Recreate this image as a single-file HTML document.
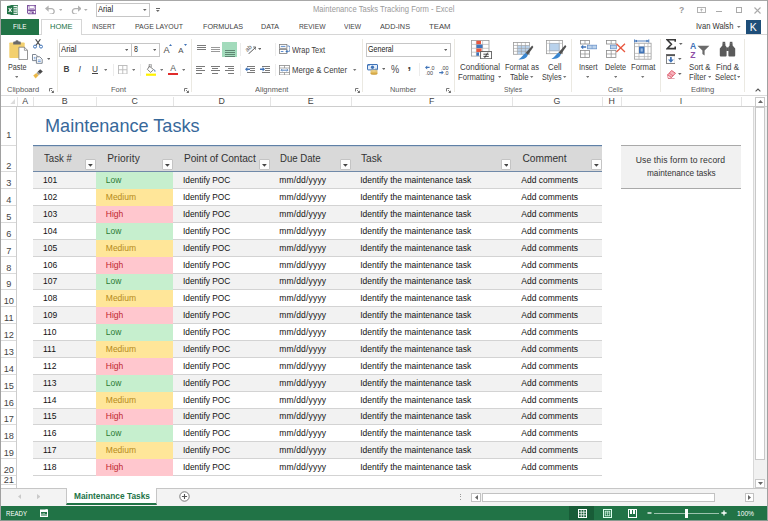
<!DOCTYPE html>
<html lang="en">
<head>
<meta charset="utf-8">
<title>Maintenance Tasks Tracking Form - Excel</title>
<style>
html,body{margin:0;padding:0}
body{width:768px;height:521px;overflow:hidden;background:#fff;font-family:"Liberation Sans",sans-serif;position:relative}
.t{position:absolute;white-space:nowrap;margin:0}
.b{position:absolute;margin:0;display:block}
</style>
</head>
<body>
<!-- title bar and tabs -->
<div class="b" style="left:0px;top:0px;width:768px;height:96px;background:#fff;"></div>
<svg class="b" style="left:7px;top:5px" width="11" height="10" viewBox="0 0 11 10"><rect x="4" y="0.6" width="7" height="8.8" fill="#fff" stroke="#217346" stroke-width="0.9"/><path d="M6.2 2.5H9.8M6.2 4.2H9.8M6.2 5.9H9.8M6.2 7.6H9.8" stroke="#217346" stroke-width="0.8"/><path d="M0 1L6.5 0V10L0 9Z" fill="#217346"/><path d="M1.7 3L4.6 7M4.6 3L1.7 7" stroke="#fff" stroke-width="1.1"/></svg>
<svg class="b" style="left:27px;top:5.3px" width="9.4" height="9.4" viewBox="0 0 9.4 9.4"><path d="M0.6 0.6H8.8V8.8H1.6L0.6 7.8Z" fill="#fff" stroke="#7a4e9c" stroke-width="1.1"/><rect x="2.2" y="0.8" width="5" height="2.8" fill="#fff" stroke="#9a78b6" stroke-width="0.6"/><rect x="1.2" y="4.4" width="7" height="1.6" fill="#7a4e9c"/><rect x="2.6" y="6.4" width="4.2" height="2.4" fill="#7a4e9c"/><rect x="3.4" y="6.9" width="1.2" height="1.6" fill="#fff"/></svg>
<svg class="b" style="left:45px;top:4.6px" width="10.6" height="9.6" viewBox="0 0 10.6 9.6"><path d="M1.4 3.6H6.4A2.8 2.8 0 0 1 6.4 9.2H4.6" fill="none" stroke="#b2b2b2" stroke-width="1.3"/><path d="M0 3.6L3.6 0.4V6.8Z" fill="#b2b2b2"/></svg>
<svg class="b" style="left:58.6px;top:8.6px" width="3.6" height="2" viewBox="0 0 3.6 2"><path d="M0 0H3.6 L1.8 2Z" fill="#b0b0b0"/></svg>
<svg class="b" style="left:70.8px;top:4.6px" width="10.6" height="9.6" viewBox="0 0 10.6 9.6"><path d="M9.2 3.6H4.2A2.8 2.8 0 0 0 4.2 9.2H6" fill="none" stroke="#b2b2b2" stroke-width="1.3"/><path d="M10.6 3.6L7 0.4V6.8Z" fill="#b2b2b2"/></svg>
<svg class="b" style="left:84.4px;top:8.6px" width="3.6" height="2" viewBox="0 0 3.6 2"><path d="M0 0H3.6 L1.8 2Z" fill="#b0b0b0"/></svg>
<div class="b" style="left:95.5px;top:3px;width:54.5px;height:13.5px;background:#fff;border:1px solid #c6c6c6;box-sizing:border-box;"></div>
<div class="t" style="left:97.6px;top:4.2px;font-size:8.6px;line-height:11px;color:#222;transform:scaleX(0.883);transform-origin:0 50%;">Arial</div>
<svg class="b" style="left:143.2px;top:9.3px" width="3.6" height="2" viewBox="0 0 3.6 2"><path d="M0 0H3.6 L1.8 2Z" fill="#666"/></svg>
<div class="b" style="left:156.3px;top:8px;width:3.6px;height:0.9px;background:#666;"></div>
<svg class="b" style="left:156.3px;top:9.8px" width="3.6" height="2" viewBox="0 0 3.6 2"><path d="M0 0H3.6 L1.8 2Z" fill="#666"/></svg>
<div class="t" style="left:312.5px;top:4.4px;font-size:8.2px;line-height:11px;color:#9a9a9a;transform:scaleX(0.931);transform-origin:0 50%;">Maintenance Tasks Tracking Form - Excel</div>
<div class="t" style="left:679.07px;top:4.5px;font-size:8.6px;line-height:11px;color:#999;font-weight:bold;">?</div>
<svg class="b" style="left:696.5px;top:7px" width="9" height="6" viewBox="0 0 9 6"><rect x="0.5" y="0.5" width="8" height="5" fill="none" stroke="#aaa" stroke-width="0.9"/><path d="M4.5 2V4.6M3.1 3.2L4.5 1.8L5.9 3.2" fill="none" stroke="#aaa" stroke-width="0.8"/></svg>
<div class="b" style="left:716px;top:10.5px;width:6px;height:1.2px;background:#aaa;"></div>
<div class="b" style="left:735.5px;top:7px;width:6.5px;height:5.8px;border:1px solid #aaa;box-sizing:border-box;border-top-width:1.6px;"></div>
<svg class="b" style="left:754px;top:6.5px" width="7" height="7" viewBox="0 0 7 7"><path d="M0.5 0.5L6.5 6.5M6.5 0.5L0.5 6.5" stroke="#aaa" stroke-width="1.1"/></svg>
<div class="b" style="left:0px;top:34px;width:768px;height:1px;background:#d6d6d6;"></div>
<div class="b" style="left:0px;top:19px;width:39px;height:15.5px;background:#217346;"></div>
<div class="t" style="left:13.3px;top:22px;font-size:8px;line-height:10px;color:#fff;transform:scaleX(0.793);transform-origin:0 50%;">FILE</div>
<div class="b" style="left:41px;top:19px;width:41px;height:16px;background:#fff;border:1px solid #d6d6d6;border-bottom:none;box-sizing:border-box;"></div>
<div class="t" style="left:50px;top:22.2px;font-size:8px;line-height:10px;color:#217346;transform:scaleX(0.937);transform-origin:0 50%;">HOME</div>
<div class="t" style="left:91.7px;top:22.2px;font-size:8px;line-height:10px;color:#444;transform:scaleX(0.798);transform-origin:0 50%;">INSERT</div>
<div class="t" style="left:135px;top:22.2px;font-size:8px;line-height:10px;color:#444;transform:scaleX(0.868);transform-origin:0 50%;">PAGE LAYOUT</div>
<div class="t" style="left:202.5px;top:22.2px;font-size:8px;line-height:10px;color:#444;transform:scaleX(0.9);transform-origin:0 50%;">FORMULAS</div>
<div class="t" style="left:261px;top:22.2px;font-size:8px;line-height:10px;color:#444;transform:scaleX(0.893);transform-origin:0 50%;">DATA</div>
<div class="t" style="left:298.5px;top:22.2px;font-size:8px;line-height:10px;color:#444;transform:scaleX(0.84);transform-origin:0 50%;">REVIEW</div>
<div class="t" style="left:344px;top:22.2px;font-size:8px;line-height:10px;color:#444;transform:scaleX(0.831);transform-origin:0 50%;">VIEW</div>
<div class="t" style="left:380px;top:22.2px;font-size:8px;line-height:10px;color:#444;transform:scaleX(0.912);transform-origin:0 50%;">ADD-INS</div>
<div class="t" style="left:429px;top:22.2px;font-size:8px;line-height:10px;color:#444;transform:scaleX(0.967);transform-origin:0 50%;">TEAM</div>
<div class="t" style="left:695.5px;top:20.8px;font-size:8.4px;line-height:11px;color:#333;transform:scaleX(0.909);transform-origin:0 50%;">Ivan Walsh</div>
<svg class="b" style="left:737.2px;top:25.8px" width="3.6" height="2" viewBox="0 0 3.6 2"><path d="M0 0H3.6 L1.8 2Z" fill="#777"/></svg>
<div class="b" style="left:746px;top:20px;width:14.5px;height:14px;background:#1e4e79;"></div>
<div class="t" style="left:749.8px;top:20px;font-size:10.5px;line-height:14px;color:#fff;">K</div>
<!-- ribbon -->
<svg class="b" style="left:9px;top:40px" width="19" height="20" viewBox="0 0 19 20"><rect x="0.3" y="2.4" width="15.4" height="15.6" rx="0.8" fill="#f3d06f"/><path d="M4.2 4.4V2.4A0.8 0.8 0 0 1 5 1.6H6.4A1.6 1.4 0 0 1 9.6 1.6H11A0.8 0.8 0 0 1 11.8 2.4V4.4Z" fill="#6a6a6a"/><path d="M9.9 7.2H15.4L18.5 10.3V19.6H9.9Z" fill="#fff" stroke="#7a7a7a" stroke-width="0.8"/><path d="M15.4 7.2V10.3H18.5" fill="none" stroke="#7a7a7a" stroke-width="0.7"/></svg>
<div class="t" style="left:7.5px;top:61.5px;font-size:8.3px;line-height:11px;color:#3c3c3c;transform:scaleX(0.872);transform-origin:0 50%;">Paste</div>
<svg class="b" style="left:14.9px;top:75.8px" width="3.6" height="2" viewBox="0 0 3.6 2"><path d="M0 0H3.6 L1.8 2Z" fill="#777"/></svg>
<svg class="b" style="left:32.8px;top:39.3px" width="10" height="9.6" viewBox="0 0 10 9.6"><path d="M2.6 0.2L7.2 6.6M7.4 0.2L2.8 6.6" stroke="#505050" stroke-width="1.15" fill="none"/><circle cx="2" cy="7.6" r="1.5" fill="#fff" stroke="#3f73b8" stroke-width="1"/><circle cx="8" cy="7.6" r="1.5" fill="#fff" stroke="#3f73b8" stroke-width="1"/></svg>
<svg class="b" style="left:32.2px;top:54.2px" width="10.8" height="9.8" viewBox="0 0 10.8 9.8"><path d="M0.5 0.5H3.8L5.8 2.5V6.6H0.5Z" fill="#fff" stroke="#707a88" stroke-width="0.9"/><path d="M4.4 2.8H7.8L10.2 5.2V9.3H4.4Z" fill="#fff" stroke="#707a88" stroke-width="0.9"/><path d="M1.8 3.4H3.4M1.8 4.8H3.4M5.8 6H8.8M5.8 7.5H8.8" stroke="#5f8fd0" stroke-width="0.8"/></svg>
<svg class="b" style="left:46.5px;top:58.4px" width="3.6" height="2" viewBox="0 0 3.6 2"><path d="M0 0H3.6 L1.8 2Z" fill="#666"/></svg>
<svg class="b" style="left:33.3px;top:69.3px" width="10" height="9.6" viewBox="0 0 10 9.6"><path d="M7.2 0.2L9.8 2.4L7 5L4.6 2.8Z" fill="#4a4a4a"/><path d="M4.4 3L6.8 5.2L5.9 6.1L3.5 3.9Z" fill="#8a8a8a"/><path d="M3.3 4.1L5.7 6.3L2.6 9.4L0.2 6.6Z" fill="#efc050"/><path d="M1.6 6.2L3.4 8M2.6 5.2L4.4 7" stroke="#d89a3c" stroke-width="0.5"/></svg>
<div class="t" style="left:6.9px;top:84.8px;font-size:7.8px;line-height:10px;color:#5a5a5a;transform:scaleX(0.964);transform-origin:0 50%;">Clipboard</div>
<svg class="b" style="left:48.8px;top:88px" width="5" height="5" viewBox="0 0 5 5"><path d="M0.5 3.4V0.5H3.4" fill="none" stroke="#777" stroke-width="1"/><path d="M2 2L4 4" stroke="#777" stroke-width="0.9"/><path d="M4.9 2.2V4.9H2.2Z" fill="#666"/></svg>
<div class="b" style="left:56.5px;top:39px;width:1px;height:53px;background:#ebe9e2;"></div>
<div class="b" style="left:59px;top:42.5px;width:73px;height:14.5px;background:#fff;border:1px solid #c6c6c6;box-sizing:border-box;"></div>
<div class="b" style="left:131px;top:42.5px;width:28.5px;height:14.5px;background:#fff;border:1px solid #c6c6c6;box-sizing:border-box;"></div>
<div class="t" style="left:61.3px;top:44.3px;font-size:8.6px;line-height:11px;color:#222;transform:scaleX(0.907);transform-origin:0 50%;">Arial</div>
<svg class="b" style="left:124.5px;top:49px" width="3.4" height="2" viewBox="0 0 3.4 2"><path d="M0 0H3.4 L1.7 2Z" fill="#666"/></svg>
<div class="t" style="left:134px;top:44.3px;font-size:8.6px;line-height:11px;color:#222;transform:scaleX(0.815);transform-origin:0 50%;">8</div>
<svg class="b" style="left:152.6px;top:49px" width="3.4" height="2" viewBox="0 0 3.4 2"><path d="M0 0H3.4 L1.7 2Z" fill="#666"/></svg>
<div class="t" style="left:163.6px;top:44px;font-size:9.2px;line-height:12px;color:#4a4a4a;">A</div>
<svg class="b" style="left:169.3px;top:44px" width="3" height="2" viewBox="0 0 3 2"><path d="M0 2H3L1.5 0Z" fill="#3f73b8"/></svg>
<div class="t" style="left:178.2px;top:45.6px;font-size:7.8px;line-height:10px;color:#4a4a4a;">A</div>
<svg class="b" style="left:183.5px;top:44px" width="3" height="2" viewBox="0 0 3 2"><path d="M0 0H3L1.5 2Z" fill="#3f73b8"/></svg>
<div class="t" style="left:63.4px;top:63.7px;font-size:8.3px;line-height:11px;color:#444;font-weight:bold;">B</div>
<div class="t" style="left:78.6px;top:63.7px;font-size:8.8px;line-height:11px;color:#444;font-style:italic;font-family:"Liberation Serif",serif;font-weight:bold;">I</div>
<div class="t" style="left:92px;top:63.5px;font-size:8.3px;line-height:11px;color:#444;text-decoration:underline;">U</div>
<svg class="b" style="left:103.8px;top:69px" width="3.4" height="2" viewBox="0 0 3.4 2"><path d="M0 0H3.4 L1.7 2Z" fill="#777"/></svg>
<div class="b" style="left:113px;top:64px;width:1px;height:12px;background:#ececec;"></div>
<svg class="b" style="left:118px;top:64.5px" width="9.5" height="9.5" viewBox="0 0 9.5 9.5"><rect x="0.5" y="0.5" width="8.5" height="8.5" fill="none" stroke="#b9b9b9" stroke-width="0.9"/><path d="M4.75 0.5V9M0.5 4.75H9" stroke="#b9b9b9" stroke-width="0.9"/></svg>
<svg class="b" style="left:132px;top:69px" width="3.4" height="2" viewBox="0 0 3.4 2"><path d="M0 0H3.4 L1.7 2Z" fill="#777"/></svg>
<div class="b" style="left:140px;top:64px;width:1px;height:12px;background:#ececec;"></div>
<svg class="b" style="left:146px;top:63.5px" width="10.5" height="12" viewBox="0 0 10.5 12"><path d="M3.4 2.2L7.6 5.6L4.6 8.4L1.4 5.4Z" fill="#fff" stroke="#666" stroke-width="0.8"/><path d="M3.2 3.4V0.8A1 1 0 0 1 5.2 0.8V3.2" fill="none" stroke="#666" stroke-width="0.7"/><path d="M8.6 5.2C9.6 6.6 9.8 7.4 9 7.8C8.2 7.6 8 6.6 8.6 5.2Z" fill="#3f73b8"/><rect x="0" y="9.6" width="10" height="2.2" fill="#fff200"/></svg>
<svg class="b" style="left:160.1px;top:69px" width="3.4" height="2" viewBox="0 0 3.4 2"><path d="M0 0H3.4 L1.7 2Z" fill="#777"/></svg>
<div class="t" style="left:170.13px;top:62.8px;font-size:8.6px;line-height:11px;color:#555;">A</div>
<div class="b" style="left:168px;top:73px;width:10px;height:2.3px;background:#e02b2b;"></div>
<svg class="b" style="left:182.1px;top:69px" width="3.4" height="2" viewBox="0 0 3.4 2"><path d="M0 0H3.4 L1.7 2Z" fill="#777"/></svg>
<div class="t" style="left:110.9px;top:84.8px;font-size:7.8px;line-height:10px;color:#5a5a5a;transform:scaleX(0.967);transform-origin:0 50%;">Font</div>
<svg class="b" style="left:184px;top:87.8px" width="5" height="5" viewBox="0 0 5 5"><path d="M0.5 3.4V0.5H3.4" fill="none" stroke="#777" stroke-width="1"/><path d="M2 2L4 4" stroke="#777" stroke-width="0.9"/><path d="M4.9 2.2V4.9H2.2Z" fill="#666"/></svg>
<div class="b" style="left:191px;top:39px;width:1px;height:53px;background:#ebe9e2;"></div>
<div class="b" style="left:196.5px;top:44.5px;width:9px;height:0.9px;background:#7a7a7a;"></div>
<div class="b" style="left:196.5px;top:46.6px;width:9px;height:0.9px;background:#7a7a7a;"></div>
<div class="b" style="left:196.5px;top:48.7px;width:9px;height:0.9px;background:#7a7a7a;"></div>
<div class="b" style="left:210.7px;top:46.8px;width:9px;height:0.9px;background:#9a9a9a;"></div>
<div class="b" style="left:210.7px;top:48.8px;width:9px;height:0.9px;background:#9a9a9a;"></div>
<div class="b" style="left:210.7px;top:50.8px;width:9px;height:0.9px;background:#9a9a9a;"></div>
<div class="b" style="left:222.3px;top:42px;width:14.7px;height:15.3px;background:#a3dbbc;"></div>
<div class="b" style="left:225px;top:49.6px;width:9.6px;height:0.9px;background:#5f8672;"></div>
<div class="b" style="left:225px;top:51.7px;width:9.6px;height:0.9px;background:#5f8672;"></div>
<div class="b" style="left:225px;top:53.8px;width:9.6px;height:0.9px;background:#5f8672;"></div>
<div class="b" style="left:225px;top:55.9px;width:9.6px;height:0.9px;background:#5f8672;"></div>
<div class="b" style="left:240px;top:43px;width:1px;height:13px;background:#ececec;"></div>
<svg class="b" style="left:244.5px;top:43.5px" width="11.5" height="10.5" viewBox="0 0 11.5 10.5"><path d="M3.4 10L10.6 3.4" stroke="#555" stroke-width="1"/><path d="M8.2 3L10.9 3.1L10.8 5.8" fill="none" stroke="#555" stroke-width="0.9"/><text x="0.2" y="6.2" font-family="Liberation Sans, sans-serif" font-size="6" fill="#555" transform="rotate(-42 3.4 4.4)">ab</text></svg>
<svg class="b" style="left:257.6px;top:48.4px" width="3.6" height="2" viewBox="0 0 3.6 2"><path d="M0 0H3.6 L1.8 2Z" fill="#666"/></svg>
<div class="b" style="left:274.5px;top:43px;width:1px;height:13px;background:#ececec;"></div>
<svg class="b" style="left:278.7px;top:44px" width="11.4" height="10" viewBox="0 0 11.4 10"><rect x="0.5" y="0.5" width="7.4" height="3.8" fill="#fff" stroke="#7d7d7d" stroke-width="0.8"/><rect x="0.5" y="5.6" width="7.4" height="3.8" fill="#fff" stroke="#7d7d7d" stroke-width="0.8"/><path d="M1.8 2.4H6.4M1.8 7.5H4.4" stroke="#5f8fd0" stroke-width="1"/><path d="M8.4 2H9.6A1.4 1.4 0 0 1 11 3.4V5.6A1.4 1.4 0 0 1 9.6 7.4H7.6" fill="none" stroke="#3f73b8" stroke-width="0.9"/><path d="M8.4 5.8L6.4 7.4L8.4 9Z" fill="#3f73b8"/></svg>
<div class="t" style="left:292px;top:44.5px;font-size:8.3px;line-height:11px;color:#3c3c3c;transform:scaleX(0.89);transform-origin:0 50%;">Wrap Text</div>
<div class="b" style="left:196.4px;top:66.2px;width:9px;height:0.9px;background:#7a7a7a;"></div>
<div class="b" style="left:196.4px;top:68.3px;width:6px;height:0.9px;background:#7a7a7a;"></div>
<div class="b" style="left:196.4px;top:70.4px;width:9px;height:0.9px;background:#7a7a7a;"></div>
<div class="b" style="left:196.4px;top:72.5px;width:6px;height:0.9px;background:#7a7a7a;"></div>
<div class="b" style="left:210.8px;top:66.2px;width:9px;height:0.9px;background:#7a7a7a;"></div>
<div class="b" style="left:212.3px;top:68.3px;width:6px;height:0.9px;background:#7a7a7a;"></div>
<div class="b" style="left:210.8px;top:70.4px;width:9px;height:0.9px;background:#7a7a7a;"></div>
<div class="b" style="left:212.3px;top:72.5px;width:6px;height:0.9px;background:#7a7a7a;"></div>
<div class="b" style="left:225.3px;top:66.2px;width:9px;height:0.9px;background:#7a7a7a;"></div>
<div class="b" style="left:228.3px;top:68.3px;width:6px;height:0.9px;background:#7a7a7a;"></div>
<div class="b" style="left:225.3px;top:70.4px;width:9px;height:0.9px;background:#7a7a7a;"></div>
<div class="b" style="left:228.3px;top:72.5px;width:6px;height:0.9px;background:#7a7a7a;"></div>
<div class="b" style="left:240px;top:64px;width:1px;height:12px;background:#ececec;"></div>
<div class="b" style="left:247px;top:66px;width:8px;height:0.9px;background:#7a7a7a;"></div>
<div class="b" style="left:250px;top:68.1px;width:5px;height:0.9px;background:#7a7a7a;"></div>
<div class="b" style="left:250px;top:70.2px;width:5px;height:0.9px;background:#7a7a7a;"></div>
<div class="b" style="left:247px;top:72.3px;width:8px;height:0.9px;background:#7a7a7a;"></div>
<svg class="b" style="left:244.5px;top:67.2px" width="5" height="4.6" viewBox="0 0 5 4.6"><path d="M0 2.3L2.4 0V1.6H5V3H2.4V4.6Z" fill="#3f73b8"/></svg>
<div class="b" style="left:262px;top:66px;width:8px;height:0.9px;background:#7a7a7a;"></div>
<div class="b" style="left:265px;top:68.1px;width:5px;height:0.9px;background:#7a7a7a;"></div>
<div class="b" style="left:265px;top:70.2px;width:5px;height:0.9px;background:#7a7a7a;"></div>
<div class="b" style="left:262px;top:72.3px;width:8px;height:0.9px;background:#7a7a7a;"></div>
<svg class="b" style="left:259.5px;top:67.2px" width="5" height="4.6" viewBox="0 0 5 4.6"><path d="M5 2.3L2.6 0V1.6H0V3H2.6V4.6Z" fill="#3f73b8"/></svg>
<div class="b" style="left:274.5px;top:64px;width:1px;height:12px;background:#ececec;"></div>
<svg class="b" style="left:279px;top:64.5px" width="11" height="10.5" viewBox="0 0 11 10.5"><rect x="0.5" y="0.5" width="10" height="9.5" fill="#fff" stroke="#8a8a8a" stroke-width="0.8"/><path d="M0.5 3H10.5M0.5 7.5H10.5M5.5 0.5V3M5.5 7.5V10" stroke="#8a8a8a" stroke-width="0.7"/><path d="M2.4 5.2H8.6" stroke="#3f73b8" stroke-width="0.9"/><path d="M3.2 4L2 5.2L3.2 6.4M7.8 4L9 5.2L7.8 6.4" fill="none" stroke="#3f73b8" stroke-width="0.8"/></svg>
<div class="t" style="left:292px;top:64.5px;font-size:8.3px;line-height:11px;color:#3c3c3c;transform:scaleX(0.939);transform-origin:0 50%;">Merge &amp; Center</div>
<svg class="b" style="left:353.3px;top:69px" width="3.4" height="2" viewBox="0 0 3.4 2"><path d="M0 0H3.4 L1.7 2Z" fill="#777"/></svg>
<div class="t" style="left:254.6px;top:84.8px;font-size:7.8px;line-height:10px;color:#5a5a5a;transform:scaleX(0.963);transform-origin:0 50%;">Alignment</div>
<svg class="b" style="left:355px;top:87.8px" width="5" height="5" viewBox="0 0 5 5"><path d="M0.5 3.4V0.5H3.4" fill="none" stroke="#777" stroke-width="1"/><path d="M2 2L4 4" stroke="#777" stroke-width="0.9"/><path d="M4.9 2.2V4.9H2.2Z" fill="#666"/></svg>
<div class="b" style="left:362px;top:39px;width:1px;height:53px;background:#ebe9e2;"></div>
<div class="b" style="left:366px;top:42.5px;width:84.5px;height:14.5px;background:#fff;border:1px solid #c6c6c6;box-sizing:border-box;"></div>
<div class="t" style="left:367.9px;top:44.3px;font-size:8.6px;line-height:11px;color:#222;transform:scaleX(0.83);transform-origin:0 50%;">General</div>
<svg class="b" style="left:444px;top:49px" width="3.4" height="2" viewBox="0 0 3.4 2"><path d="M0 0H3.4 L1.7 2Z" fill="#666"/></svg>
<svg class="b" style="left:367.4px;top:63.8px" width="11" height="11" viewBox="0 0 11 11"><rect x="0.5" y="0.5" width="10" height="5.4" rx="0.5" fill="#e4eefa" stroke="#3f73b8" stroke-width="1"/><ellipse cx="5.5" cy="3.2" rx="1.6" ry="1.7" fill="#3f73b8"/><path d="M1.2 1.4H2.6M8.4 5H9.8" stroke="#3f73b8" stroke-width="0.8"/><ellipse cx="7" cy="9.6" rx="3.4" ry="1.1" fill="#e3b44c" stroke="#b98a2e" stroke-width="0.4"/><ellipse cx="7" cy="8.3" rx="3.4" ry="1.1" fill="#efcb6e" stroke="#b98a2e" stroke-width="0.4"/><ellipse cx="7" cy="7" rx="3.4" ry="1.1" fill="#f6dc92" stroke="#b98a2e" stroke-width="0.4"/></svg>
<svg class="b" style="left:381.7px;top:68.4px" width="3.6" height="2" viewBox="0 0 3.6 2"><path d="M0 0H3.6 L1.8 2Z" fill="#666"/></svg>
<div class="t" style="left:391.4px;top:63.3px;font-size:10.2px;line-height:13px;color:#4a4a4a;transform:scaleX(0.904);transform-origin:0 50%;">%</div>
<div class="t" style="left:407.59px;top:56.1px;font-size:13px;line-height:17px;color:#4a4a4a;font-weight:bold;">,</div>
<div class="b" style="left:418.5px;top:63px;width:1px;height:13px;background:#ececec;"></div>
<svg class="b" style="left:424.5px;top:64.5px" width="10" height="10.5" viewBox="0 0 10 10.5"><path d="M0 2.4L2.2 0.4V1.8H4.6V3H2.2V4.4Z" fill="#3f73b8"/><text x="5" y="4.6" font-family="Liberation Sans, sans-serif" font-size="5.4" fill="#444">.0</text><text x="0.5" y="10" font-family="Liberation Sans, sans-serif" font-size="5.4" fill="#444">.00</text></svg>
<svg class="b" style="left:439px;top:64.5px" width="10" height="10.5" viewBox="0 0 10 10.5"><text x="2" y="4.6" font-family="Liberation Sans, sans-serif" font-size="5.4" fill="#444">.00</text><path d="M4.8 7.6L2.6 5.6V7H0.2V8.2H2.6V9.6Z" fill="#3f73b8"/><text x="5" y="10" font-family="Liberation Sans, sans-serif" font-size="5.4" fill="#444">.0</text></svg>
<div class="t" style="left:390.1px;top:84.8px;font-size:7.8px;line-height:10px;color:#5a5a5a;transform:scaleX(0.944);transform-origin:0 50%;">Number</div>
<svg class="b" style="left:446.3px;top:87.8px" width="5" height="5" viewBox="0 0 5 5"><path d="M0.5 3.4V0.5H3.4" fill="none" stroke="#777" stroke-width="1"/><path d="M2 2L4 4" stroke="#777" stroke-width="0.9"/><path d="M4.9 2.2V4.9H2.2Z" fill="#666"/></svg>
<div class="b" style="left:453.5px;top:39px;width:1px;height:53px;background:#ebe9e2;"></div>
<svg class="b" style="left:471px;top:39.8px" width="21" height="19.2" viewBox="0 0 21 19.2"><rect x="0.5" y="0.5" width="17.5" height="15.6" fill="#fff" stroke="#9a9a9a" stroke-width="0.8"/><path d="M0.5 4.4H18M0.5 8.3H18M0.5 12.2H18M5.4 0.5V16M11.6 0.5V16" stroke="#b5b5b5" stroke-width="0.7"/><rect x="5.4" y="0.8" width="4.6" height="3.4" fill="#e8573f"/><rect x="5.4" y="4.6" width="6.2" height="3.5" fill="#3f73b8"/><rect x="5.4" y="8.5" width="5.2" height="3.5" fill="#e8573f"/><rect x="5.4" y="12.4" width="2.6" height="3.4" fill="#3f73b8"/><rect x="9.6" y="11.6" width="11" height="7.2" fill="#fff" stroke="#555" stroke-width="0.9"/><path d="M12.4 14.2H17.8M12.4 16.4H17.8M16.8 12.6L13.6 18" stroke="#333" stroke-width="0.9"/></svg>
<div class="t" style="left:460px;top:61.5px;font-size:8.3px;line-height:11px;color:#3c3c3c;transform:scaleX(0.963);transform-origin:0 50%;">Conditional</div>
<div class="t" style="left:458px;top:71.5px;font-size:8.3px;line-height:11px;color:#3c3c3c;transform:scaleX(0.92);transform-origin:0 50%;">Formatting</div>
<svg class="b" style="left:498.1px;top:76.3px" width="3.4" height="2" viewBox="0 0 3.4 2"><path d="M0 0H3.4 L1.7 2Z" fill="#777"/></svg>
<svg class="b" style="left:513px;top:41.6px" width="21" height="18.4" viewBox="0 0 21 18.4"><rect x="0.5" y="0.5" width="16" height="11.8" fill="#fff" stroke="#9a9a9a" stroke-width="0.8"/><rect x="4.4" y="3.5" width="12.1" height="8.8" fill="#b9d2ec"/><path d="M0.5 3.5H16.5M0.5 6.4H16.5M0.5 9.3H16.5M4.4 0.5V12.3M8.4 0.5V12.3M12.4 0.5V12.3" stroke="#9a9a9a" stroke-width="0.6"/><path d="M19.2 3.6L12.6 11L14.8 13L20.4 5Z" fill="#505050"/><path d="M12.6 11L14.8 13C14 16 10.5 17.6 5.4 17.6C8.6 16 10 12.6 12.6 11Z" fill="#3a86cf"/></svg>
<div class="t" style="left:505px;top:61.5px;font-size:8.3px;line-height:11px;color:#3c3c3c;transform:scaleX(0.91);transform-origin:0 50%;">Format as</div>
<div class="t" style="left:510px;top:71.5px;font-size:8.3px;line-height:11px;color:#3c3c3c;transform:scaleX(0.932);transform-origin:0 50%;">Table</div>
<svg class="b" style="left:530.3px;top:76.3px" width="3.4" height="2" viewBox="0 0 3.4 2"><path d="M0 0H3.4 L1.7 2Z" fill="#777"/></svg>
<svg class="b" style="left:546px;top:40.2px" width="21" height="19.8" viewBox="0 0 21 19.8"><rect x="0.5" y="0.5" width="16" height="13.2" fill="#fff" stroke="#9a9a9a" stroke-width="0.8"/><rect x="3.6" y="3.4" width="9.6" height="7.4" fill="#b9d2ec" stroke="#8aa9cf" stroke-width="0.6"/><path d="M0.5 3.4H16.5M0.5 10.8H16.5M3.6 0.5V13.7M13.2 0.5V13.7" stroke="#b5b5b5" stroke-width="0.6"/><path d="M19.2 5.0L12.6 12.4L14.8 14.4L20.4 6.4Z" fill="#505050"/><path d="M12.6 12.4L14.8 14.4C14 17.4 10.5 19.0 5.4 19.0C8.6 17.4 10 14.0 12.6 12.4Z" fill="#3a86cf"/></svg>
<div class="t" style="left:548px;top:61.5px;font-size:8.3px;line-height:11px;color:#3c3c3c;transform:scaleX(0.944);transform-origin:0 50%;">Cell</div>
<div class="t" style="left:542px;top:71.5px;font-size:8.3px;line-height:11px;color:#3c3c3c;transform:scaleX(0.863);transform-origin:0 50%;">Styles</div>
<svg class="b" style="left:563.3px;top:76.3px" width="3.4" height="2" viewBox="0 0 3.4 2"><path d="M0 0H3.4 L1.7 2Z" fill="#777"/></svg>
<div class="t" style="left:503.5px;top:85px;font-size:7.8px;line-height:10px;color:#5a5a5a;transform:scaleX(0.847);transform-origin:0 50%;">Styles</div>
<div class="b" style="left:570.5px;top:39px;width:1px;height:53px;background:#ebe9e2;"></div>
<svg class="b" style="left:579.6px;top:40px" width="17.6" height="18.4" viewBox="0 0 17.6 18.4"><rect x="0.5" y="0.6" width="9" height="3.4" fill="#fff" stroke="#8a8a8a" stroke-width="0.8"/><path d="M5 0.6V4" stroke="#8a8a8a" stroke-width="0.7"/><rect x="7.4" y="5.2" width="9.4" height="3.6" fill="#bcd3ec" stroke="#6b93c9" stroke-width="0.8"/><path d="M12.1 5.2V8.8" stroke="#6b93c9" stroke-width="0.6"/><path d="M0.6 7L3.2 4.8V6.3H6.2V7.7H3.2V9.2Z" fill="#3f73b8"/><rect x="0.5" y="10.6" width="9" height="6.8" fill="#fff" stroke="#8a8a8a" stroke-width="0.8"/><path d="M0.5 14H9.5M5 10.6V17.4" stroke="#8a8a8a" stroke-width="0.7"/></svg>
<div class="t" style="left:578.5px;top:61.5px;font-size:8.3px;line-height:11px;color:#3c3c3c;transform:scaleX(0.891);transform-origin:0 50%;">Insert</div>
<svg class="b" style="left:586.1px;top:76.3px" width="3.4" height="2" viewBox="0 0 3.4 2"><path d="M0 0H3.4 L1.7 2Z" fill="#777"/></svg>
<svg class="b" style="left:606px;top:40px" width="19.6" height="18.4" viewBox="0 0 19.6 18.4"><rect x="0.5" y="0.6" width="9.4" height="3.4" fill="#fff" stroke="#8a8a8a" stroke-width="0.8"/><path d="M5.2 0.6V4" stroke="#8a8a8a" stroke-width="0.7"/><rect x="4.4" y="5.2" width="6" height="3.6" fill="#bcd3ec" stroke="#6b93c9" stroke-width="0.8"/><path d="M10.4 3.8L19 12M19 3.8L10.4 12" stroke="#e8573f" stroke-width="1.3"/><rect x="0.5" y="10.6" width="9.4" height="6.8" fill="#fff" stroke="#8a8a8a" stroke-width="0.8"/><path d="M0.5 14H9.9M5.2 10.6V17.4" stroke="#8a8a8a" stroke-width="0.7"/></svg>
<div class="t" style="left:605px;top:61.5px;font-size:8.3px;line-height:11px;color:#3c3c3c;transform:scaleX(0.875);transform-origin:0 50%;">Delete</div>
<svg class="b" style="left:613.5px;top:76.3px" width="3.4" height="2" viewBox="0 0 3.4 2"><path d="M0 0H3.4 L1.7 2Z" fill="#777"/></svg>
<svg class="b" style="left:634px;top:39.4px" width="17.6" height="20.8" viewBox="0 0 17.6 20.8"><path d="M0.6 2H14.8M0.6 0.4V3.6M14.8 0.4V3.6" stroke="#3f73b8" stroke-width="0.9"/><path d="M0.8 2L3 0.8V3.2ZM14.6 2L12.4 0.8V3.2Z" fill="#3f73b8"/><rect x="0.5" y="4.2" width="16.6" height="16" fill="#fff" stroke="#9a9a9a" stroke-width="0.8"/><path d="M0.5 7.6H17M0.5 14.4H17M0.5 17.6H17M5 4.2V20.2M10.4 4.2V20.2M14 4.2V20.2" stroke="#b0b0b0" stroke-width="0.7"/><rect x="5" y="7.6" width="5.4" height="6.8" fill="#3f73b8"/><rect x="6.6" y="9.4" width="2.2" height="3.2" fill="#9fc0e6"/></svg>
<div class="t" style="left:631px;top:61.5px;font-size:8.3px;line-height:11px;color:#3c3c3c;transform:scaleX(0.932);transform-origin:0 50%;">Format</div>
<svg class="b" style="left:641.3px;top:76.3px" width="3.4" height="2" viewBox="0 0 3.4 2"><path d="M0 0H3.4 L1.7 2Z" fill="#777"/></svg>
<div class="t" style="left:608px;top:84.8px;font-size:7.8px;line-height:10px;color:#5a5a5a;transform:scaleX(0.865);transform-origin:0 50%;">Cells</div>
<div class="b" style="left:660px;top:39px;width:1px;height:53px;background:#ebe9e2;"></div>
<svg class="b" style="left:665.5px;top:39px" width="10" height="10.5" viewBox="0 0 10 10.5"><path d="M9.2 2.8V0.8H1.2L5.4 5.2L1.2 9.6H9.2V7.6" fill="none" stroke="#3a3a3a" stroke-width="1.6"/></svg>
<svg class="b" style="left:679px;top:43px" width="3.6" height="2" viewBox="0 0 3.6 2"><path d="M0 0H3.6 L1.8 2Z" fill="#666"/></svg>
<svg class="b" style="left:665.6px;top:54.2px" width="9.8" height="10" viewBox="0 0 9.8 10"><rect x="0.5" y="0.5" width="8.8" height="9" fill="#fff" stroke="#777" stroke-width="0.9"/><rect x="0.5" y="0.5" width="8.8" height="1.6" fill="#555"/><path d="M4.9 3V7.4" stroke="#3f73b8" stroke-width="1.7"/><path d="M2 5.4H7.8L4.9 8.8Z" fill="#3f73b8"/></svg>
<svg class="b" style="left:678.2px;top:58px" width="3.6" height="2" viewBox="0 0 3.6 2"><path d="M0 0H3.6 L1.8 2Z" fill="#666"/></svg>
<svg class="b" style="left:665.8px;top:69.6px" width="10" height="9.4" viewBox="0 0 10 9.4"><path d="M5.6 0.5L9.5 3.2L5.4 7.6L1.6 5Z" fill="#f7b3bd" stroke="#d9485a" stroke-width="0.8"/><path d="M3.2 3.2L7 5.8" stroke="#d9485a" stroke-width="0.6"/><path d="M1.6 5L5.4 7.6L4 8.3H2Z" fill="#fff" stroke="#d9485a" stroke-width="0.6"/><path d="M2 8.8H8.6" stroke="#c05060" stroke-width="0.7"/></svg>
<svg class="b" style="left:678.2px;top:73.2px" width="3.6" height="2" viewBox="0 0 3.6 2"><path d="M0 0H3.6 L1.8 2Z" fill="#666"/></svg>
<svg class="b" style="left:690px;top:40.6px" width="20" height="17.6" viewBox="0 0 20 17.6"><text x="0" y="7.6" font-family="Liberation Sans, sans-serif" font-size="9.6" font-weight="bold" fill="#3f73b8" transform="scale(0.9 1)">A</text><text x="0.4" y="16.8" font-family="Liberation Sans, sans-serif" font-size="9.6" font-weight="bold" fill="#8d4ea5" transform="scale(0.9 1)">Z</text><path d="M7.4 4.8H19.4L14.6 9.6V14.6L12.4 13V9.6Z" fill="#6a6a6a"/></svg>
<div class="t" style="left:689px;top:61.5px;font-size:8.3px;line-height:11px;color:#3c3c3c;transform:scaleX(0.932);transform-origin:0 50%;">Sort &amp;</div>
<div class="t" style="left:689px;top:71.5px;font-size:8.3px;line-height:11px;color:#3c3c3c;transform:scaleX(0.922);transform-origin:0 50%;">Filter</div>
<svg class="b" style="left:707.9px;top:76.3px" width="3.4" height="2" viewBox="0 0 3.4 2"><path d="M0 0H3.4 L1.7 2Z" fill="#777"/></svg>
<svg class="b" style="left:719px;top:41px" width="17" height="16.5" viewBox="0 0 17 16.5"><path d="M3.4 2.4H6.4V4.4L7.6 6V14.6A1 1 0 0 1 6.6 15.6H1.8A1 1 0 0 1 0.8 14.6V7.6L3.4 4.4Z" fill="#5a5a5a"/><path d="M13.6 2.4H10.6V4.4L9.4 6V14.6A1 1 0 0 0 10.4 15.6H15.2A1 1 0 0 0 16.2 14.6V7.6L13.6 4.4Z" fill="#5a5a5a"/><rect x="7.2" y="6.4" width="2.6" height="3.6" fill="#5a5a5a"/><rect x="3.6" y="0.8" width="2.6" height="2" fill="#5a5a5a"/><rect x="10.8" y="0.8" width="2.6" height="2" fill="#5a5a5a"/></svg>
<div class="t" style="left:716px;top:61.5px;font-size:8.3px;line-height:11px;color:#3c3c3c;transform:scaleX(0.959);transform-origin:0 50%;">Find &amp;</div>
<div class="t" style="left:714.7px;top:71.5px;font-size:8.3px;line-height:11px;color:#3c3c3c;transform:scaleX(0.91);transform-origin:0 50%;">Select</div>
<svg class="b" style="left:736.6px;top:76.3px" width="3.4" height="2" viewBox="0 0 3.4 2"><path d="M0 0H3.4 L1.7 2Z" fill="#777"/></svg>
<div class="t" style="left:691px;top:84.8px;font-size:7.8px;line-height:10px;color:#5a5a5a;transform:scaleX(0.977);transform-origin:0 50%;">Editing</div>
<div class="b" style="left:744px;top:39px;width:1px;height:53px;background:#ebe9e2;"></div>
<svg class="b" style="left:755px;top:88px" width="6" height="4" viewBox="0 0 6 4"><path d="M0.6 3.4L3 1L5.4 3.4" fill="none" stroke="#555" stroke-width="1.1"/></svg>
<!-- worksheet -->
<div class="b" style="left:0px;top:95px;width:768px;height:12px;background:#fff;border-top:1px solid #dcdcdc;border-bottom:1px solid #cdcdcd;box-sizing:border-box;"></div>
<div class="t" style="left:22.37px;top:96.1px;font-size:8.8px;line-height:11px;color:#444;">A</div>
<div class="t" style="left:61.87px;top:96.1px;font-size:8.8px;line-height:11px;color:#444;">B</div>
<div class="t" style="left:131.62px;top:96.1px;font-size:8.8px;line-height:11px;color:#444;">C</div>
<div class="t" style="left:218.47px;top:96.1px;font-size:8.8px;line-height:11px;color:#444;">D</div>
<div class="t" style="left:307.72px;top:96.1px;font-size:8.8px;line-height:11px;color:#444;">E</div>
<div class="t" style="left:428.96px;top:96.1px;font-size:8.8px;line-height:11px;color:#444;">F</div>
<div class="t" style="left:553.58px;top:96.1px;font-size:8.8px;line-height:11px;color:#444;">G</div>
<div class="t" style="left:608.47px;top:96.1px;font-size:8.8px;line-height:11px;color:#444;">H</div>
<div class="t" style="left:679.78px;top:96.1px;font-size:8.8px;line-height:11px;color:#444;">I</div>
<div class="b" style="left:17px;top:97px;width:1px;height:9px;background:#e4e4e4;"></div>
<div class="b" style="left:33px;top:97px;width:1px;height:9px;background:#e4e4e4;"></div>
<div class="b" style="left:96px;top:97px;width:1px;height:9px;background:#e4e4e4;"></div>
<div class="b" style="left:173px;top:97px;width:1px;height:9px;background:#e4e4e4;"></div>
<div class="b" style="left:270px;top:97px;width:1px;height:9px;background:#e4e4e4;"></div>
<div class="b" style="left:351px;top:97px;width:1px;height:9px;background:#e4e4e4;"></div>
<div class="b" style="left:512px;top:97px;width:1px;height:9px;background:#e4e4e4;"></div>
<div class="b" style="left:602px;top:97px;width:1px;height:9px;background:#e4e4e4;"></div>
<div class="b" style="left:621px;top:97px;width:1px;height:9px;background:#e4e4e4;"></div>
<div class="b" style="left:741px;top:97px;width:1px;height:9px;background:#e4e4e4;"></div>
<svg class="b" style="left:10.3px;top:99px" width="5" height="5.3" viewBox="0 0 5 5.3"><path d="M5 0V5.3H0Z" fill="#dcdcdc"/></svg>
<div class="b" style="left:16px;top:107px;width:1px;height:381px;background:#cdcdcd;"></div>
<div class="b" style="left:0px;top:145px;width:16px;height:1px;background:#dadada;"></div>
<div class="t" style="left:6.24px;top:129.3px;font-size:9.2px;line-height:12px;color:#444;">1</div>
<div class="b" style="left:0px;top:171px;width:16px;height:1px;background:#dadada;"></div>
<div class="t" style="left:6.24px;top:160.2px;font-size:9.2px;line-height:12px;color:#444;">2</div>
<div class="b" style="left:0px;top:188px;width:16px;height:1px;background:#dadada;"></div>
<div class="t" style="left:6.24px;top:177.2px;font-size:9.2px;line-height:12px;color:#444;">3</div>
<div class="b" style="left:0px;top:205px;width:16px;height:1px;background:#dadada;"></div>
<div class="t" style="left:6.24px;top:194.2px;font-size:9.2px;line-height:12px;color:#444;">4</div>
<div class="b" style="left:0px;top:222px;width:16px;height:1px;background:#dadada;"></div>
<div class="t" style="left:6.24px;top:211.2px;font-size:9.2px;line-height:12px;color:#444;">5</div>
<div class="b" style="left:0px;top:239px;width:16px;height:1px;background:#dadada;"></div>
<div class="t" style="left:6.24px;top:228.2px;font-size:9.2px;line-height:12px;color:#444;">6</div>
<div class="b" style="left:0px;top:256px;width:16px;height:1px;background:#dadada;"></div>
<div class="t" style="left:6.24px;top:245.2px;font-size:9.2px;line-height:12px;color:#444;">7</div>
<div class="b" style="left:0px;top:273px;width:16px;height:1px;background:#dadada;"></div>
<div class="t" style="left:6.24px;top:262.2px;font-size:9.2px;line-height:12px;color:#444;">8</div>
<div class="b" style="left:0px;top:289px;width:16px;height:1px;background:#dadada;"></div>
<div class="t" style="left:6.24px;top:278.2px;font-size:9.2px;line-height:12px;color:#444;">9</div>
<div class="b" style="left:0px;top:306px;width:16px;height:1px;background:#dadada;"></div>
<div class="t" style="left:3.68px;top:295.2px;font-size:9.2px;line-height:12px;color:#444;">10</div>
<div class="b" style="left:0px;top:323px;width:16px;height:1px;background:#dadada;"></div>
<div class="t" style="left:4.02px;top:312.2px;font-size:9.2px;line-height:12px;color:#444;">11</div>
<div class="b" style="left:0px;top:340px;width:16px;height:1px;background:#dadada;"></div>
<div class="t" style="left:3.68px;top:329.2px;font-size:9.2px;line-height:12px;color:#444;">12</div>
<div class="b" style="left:0px;top:357px;width:16px;height:1px;background:#dadada;"></div>
<div class="t" style="left:3.68px;top:346.2px;font-size:9.2px;line-height:12px;color:#444;">13</div>
<div class="b" style="left:0px;top:374px;width:16px;height:1px;background:#dadada;"></div>
<div class="t" style="left:3.68px;top:363.2px;font-size:9.2px;line-height:12px;color:#444;">14</div>
<div class="b" style="left:0px;top:391px;width:16px;height:1px;background:#dadada;"></div>
<div class="t" style="left:3.68px;top:380.2px;font-size:9.2px;line-height:12px;color:#444;">15</div>
<div class="b" style="left:0px;top:408px;width:16px;height:1px;background:#dadada;"></div>
<div class="t" style="left:3.68px;top:397.2px;font-size:9.2px;line-height:12px;color:#444;">16</div>
<div class="b" style="left:0px;top:424px;width:16px;height:1px;background:#dadada;"></div>
<div class="t" style="left:3.68px;top:413.2px;font-size:9.2px;line-height:12px;color:#444;">17</div>
<div class="b" style="left:0px;top:441px;width:16px;height:1px;background:#dadada;"></div>
<div class="t" style="left:3.68px;top:430.2px;font-size:9.2px;line-height:12px;color:#444;">18</div>
<div class="b" style="left:0px;top:458px;width:16px;height:1px;background:#dadada;"></div>
<div class="t" style="left:3.68px;top:447.2px;font-size:9.2px;line-height:12px;color:#444;">19</div>
<div class="b" style="left:0px;top:475px;width:16px;height:1px;background:#dadada;"></div>
<div class="t" style="left:3.68px;top:464.2px;font-size:9.2px;line-height:12px;color:#444;">20</div>
<div class="b" style="left:0px;top:484px;width:16px;height:1px;background:#dadada;"></div>
<div class="t" style="left:3.68px;top:474.2px;font-size:9.2px;line-height:12px;color:#444;">21</div>
<div class="t" style="left:3.68px;top:485.5px;font-size:9.2px;line-height:12px;color:#444;">22</div>
<div class="t" style="left:45.4px;top:112.5px;font-size:19px;line-height:25px;color:#37689a;transform:scaleX(0.952);transform-origin:0 50%;">Maintenance Tasks</div>
<div class="b" style="left:33px;top:145px;width:569px;height:27px;background:#d9d9d9;border-top:1px solid #5f80a6;border-bottom:1px solid #7089a8;box-sizing:border-box;"></div>
<div class="b" style="left:33px;top:146px;width:569px;height:1px;background:#c3cbd4;"></div>
<div class="t" style="left:44.2px;top:151.5px;font-size:10.2px;line-height:13px;color:#333;transform:scaleX(0.943);transform-origin:0 50%;">Task #</div>
<div class="t" style="left:107.2px;top:151.5px;font-size:10.2px;line-height:13px;color:#333;letter-spacing:0.13px;">Priority</div>
<div class="t" style="left:184px;top:151.5px;font-size:10.2px;line-height:13px;color:#333;letter-spacing:-0.05px;">Point of Contact</div>
<div class="t" style="left:280px;top:151.5px;font-size:10.2px;line-height:13px;color:#333;transform:scaleX(0.944);transform-origin:0 50%;">Due Date</div>
<div class="t" style="left:361px;top:151.5px;font-size:10.2px;line-height:13px;color:#333;">Task</div>
<div class="t" style="left:522.4px;top:151.5px;font-size:10.2px;line-height:13px;color:#333;letter-spacing:0.01px;">Comment</div>
<div class="b" style="left:85.2px;top:159px;width:10.5px;height:10.5px;background:#fdfdfd;border:1px solid #c4c4c4;box-sizing:border-box;border-radius:1px;"></div>
<svg class="b" style="left:88.2px;top:163.85px" width="4.8" height="2.7" viewBox="0 0 4.8 2.7"><path d="M0 0H4.8 L2.4 2.7Z" fill="#444"/></svg>
<div class="b" style="left:162.2px;top:159px;width:10.5px;height:10.5px;background:#fdfdfd;border:1px solid #c4c4c4;box-sizing:border-box;border-radius:1px;"></div>
<svg class="b" style="left:165.2px;top:163.85px" width="4.8" height="2.7" viewBox="0 0 4.8 2.7"><path d="M0 0H4.8 L2.4 2.7Z" fill="#444"/></svg>
<div class="b" style="left:259.2px;top:159px;width:10.5px;height:10.5px;background:#fdfdfd;border:1px solid #c4c4c4;box-sizing:border-box;border-radius:1px;"></div>
<svg class="b" style="left:262.2px;top:163.85px" width="4.8" height="2.7" viewBox="0 0 4.8 2.7"><path d="M0 0H4.8 L2.4 2.7Z" fill="#444"/></svg>
<div class="b" style="left:340.2px;top:159px;width:10.5px;height:10.5px;background:#fdfdfd;border:1px solid #c4c4c4;box-sizing:border-box;border-radius:1px;"></div>
<svg class="b" style="left:343.2px;top:163.85px" width="4.8" height="2.7" viewBox="0 0 4.8 2.7"><path d="M0 0H4.8 L2.4 2.7Z" fill="#444"/></svg>
<div class="b" style="left:500.7px;top:159px;width:10.5px;height:10.5px;background:#fdfdfd;border:1px solid #c4c4c4;box-sizing:border-box;border-radius:1px;"></div>
<svg class="b" style="left:503.7px;top:163.85px" width="4.8" height="2.7" viewBox="0 0 4.8 2.7"><path d="M0 0H4.8 L2.4 2.7Z" fill="#444"/></svg>
<div class="b" style="left:591.2px;top:159px;width:10.5px;height:10.5px;background:#fdfdfd;border:1px solid #c4c4c4;box-sizing:border-box;border-radius:1px;"></div>
<svg class="b" style="left:594.2px;top:163.85px" width="4.8" height="2.7" viewBox="0 0 4.8 2.7"><path d="M0 0H4.8 L2.4 2.7Z" fill="#444"/></svg>
<div class="b" style="left:33px;top:172px;width:569px;height:17px;background:#f2f2f2;border-bottom:1px solid #d3d3d3;box-sizing:border-box;"></div>
<div class="b" style="left:96px;top:172px;width:77px;height:17px;background:#c6efce;"></div>
<div class="t" style="left:43px;top:174.7px;font-size:8.5px;line-height:11px;color:#111;">101</div>
<div class="t" style="left:105.8px;top:174.7px;font-size:8.5px;line-height:11px;color:#2b7a34;">Low</div>
<div class="t" style="left:182.7px;top:174.7px;font-size:8.5px;line-height:11px;color:#111;transform:scaleX(0.98);transform-origin:0 50%;">Identify POC</div>
<div class="t" style="left:279.2px;top:174.7px;font-size:8.5px;line-height:11px;color:#111;letter-spacing:0.17px;">mm/dd/yyyy</div>
<div class="t" style="left:360.2px;top:174.7px;font-size:8.5px;line-height:11px;color:#111;letter-spacing:0.02px;">Identify the maintenance task</div>
<div class="t" style="left:521.3px;top:174.7px;font-size:8.5px;line-height:11px;color:#111;letter-spacing:0px;">Add comments</div>
<div class="b" style="left:33px;top:189px;width:569px;height:17px;background:#ffffff;border-bottom:1px solid #d3d3d3;box-sizing:border-box;"></div>
<div class="b" style="left:96px;top:189px;width:77px;height:17px;background:#ffe699;"></div>
<div class="t" style="left:43px;top:191.7px;font-size:8.5px;line-height:11px;color:#111;">102</div>
<div class="t" style="left:105.8px;top:191.7px;font-size:8.5px;line-height:11px;color:#b58a1a;">Medium</div>
<div class="t" style="left:182.7px;top:191.7px;font-size:8.5px;line-height:11px;color:#111;transform:scaleX(0.98);transform-origin:0 50%;">Identify POC</div>
<div class="t" style="left:279.2px;top:191.7px;font-size:8.5px;line-height:11px;color:#111;letter-spacing:0.17px;">mm/dd/yyyy</div>
<div class="t" style="left:360.2px;top:191.7px;font-size:8.5px;line-height:11px;color:#111;letter-spacing:0.02px;">Identify the maintenance task</div>
<div class="t" style="left:521.3px;top:191.7px;font-size:8.5px;line-height:11px;color:#111;letter-spacing:0px;">Add comments</div>
<div class="b" style="left:33px;top:206px;width:569px;height:17px;background:#f2f2f2;border-bottom:1px solid #d3d3d3;box-sizing:border-box;"></div>
<div class="b" style="left:96px;top:206px;width:77px;height:17px;background:#ffc7ce;"></div>
<div class="t" style="left:43px;top:208.7px;font-size:8.5px;line-height:11px;color:#111;">103</div>
<div class="t" style="left:105.8px;top:208.7px;font-size:8.5px;line-height:11px;color:#c0262d;">High</div>
<div class="t" style="left:182.7px;top:208.7px;font-size:8.5px;line-height:11px;color:#111;transform:scaleX(0.98);transform-origin:0 50%;">Identify POC</div>
<div class="t" style="left:279.2px;top:208.7px;font-size:8.5px;line-height:11px;color:#111;letter-spacing:0.17px;">mm/dd/yyyy</div>
<div class="t" style="left:360.2px;top:208.7px;font-size:8.5px;line-height:11px;color:#111;letter-spacing:0.02px;">Identify the maintenance task</div>
<div class="t" style="left:521.3px;top:208.7px;font-size:8.5px;line-height:11px;color:#111;letter-spacing:0px;">Add comments</div>
<div class="b" style="left:33px;top:223px;width:569px;height:17px;background:#ffffff;border-bottom:1px solid #d3d3d3;box-sizing:border-box;"></div>
<div class="b" style="left:96px;top:223px;width:77px;height:17px;background:#c6efce;"></div>
<div class="t" style="left:43px;top:225.7px;font-size:8.5px;line-height:11px;color:#111;">104</div>
<div class="t" style="left:105.8px;top:225.7px;font-size:8.5px;line-height:11px;color:#2b7a34;">Low</div>
<div class="t" style="left:182.7px;top:225.7px;font-size:8.5px;line-height:11px;color:#111;transform:scaleX(0.98);transform-origin:0 50%;">Identify POC</div>
<div class="t" style="left:279.2px;top:225.7px;font-size:8.5px;line-height:11px;color:#111;letter-spacing:0.17px;">mm/dd/yyyy</div>
<div class="t" style="left:360.2px;top:225.7px;font-size:8.5px;line-height:11px;color:#111;letter-spacing:0.02px;">Identify the maintenance task</div>
<div class="t" style="left:521.3px;top:225.7px;font-size:8.5px;line-height:11px;color:#111;letter-spacing:0px;">Add comments</div>
<div class="b" style="left:33px;top:240px;width:569px;height:17px;background:#f2f2f2;border-bottom:1px solid #d3d3d3;box-sizing:border-box;"></div>
<div class="b" style="left:96px;top:240px;width:77px;height:17px;background:#ffe699;"></div>
<div class="t" style="left:43px;top:242.7px;font-size:8.5px;line-height:11px;color:#111;">105</div>
<div class="t" style="left:105.8px;top:242.7px;font-size:8.5px;line-height:11px;color:#b58a1a;">Medium</div>
<div class="t" style="left:182.7px;top:242.7px;font-size:8.5px;line-height:11px;color:#111;transform:scaleX(0.98);transform-origin:0 50%;">Identify POC</div>
<div class="t" style="left:279.2px;top:242.7px;font-size:8.5px;line-height:11px;color:#111;letter-spacing:0.17px;">mm/dd/yyyy</div>
<div class="t" style="left:360.2px;top:242.7px;font-size:8.5px;line-height:11px;color:#111;letter-spacing:0.02px;">Identify the maintenance task</div>
<div class="t" style="left:521.3px;top:242.7px;font-size:8.5px;line-height:11px;color:#111;letter-spacing:0px;">Add comments</div>
<div class="b" style="left:33px;top:257px;width:569px;height:17px;background:#ffffff;border-bottom:1px solid #d3d3d3;box-sizing:border-box;"></div>
<div class="b" style="left:96px;top:257px;width:77px;height:17px;background:#ffc7ce;"></div>
<div class="t" style="left:43px;top:259.7px;font-size:8.5px;line-height:11px;color:#111;">106</div>
<div class="t" style="left:105.8px;top:259.7px;font-size:8.5px;line-height:11px;color:#c0262d;">High</div>
<div class="t" style="left:182.7px;top:259.7px;font-size:8.5px;line-height:11px;color:#111;transform:scaleX(0.98);transform-origin:0 50%;">Identify POC</div>
<div class="t" style="left:279.2px;top:259.7px;font-size:8.5px;line-height:11px;color:#111;letter-spacing:0.17px;">mm/dd/yyyy</div>
<div class="t" style="left:360.2px;top:259.7px;font-size:8.5px;line-height:11px;color:#111;letter-spacing:0.02px;">Identify the maintenance task</div>
<div class="t" style="left:521.3px;top:259.7px;font-size:8.5px;line-height:11px;color:#111;letter-spacing:0px;">Add comments</div>
<div class="b" style="left:33px;top:274px;width:569px;height:16px;background:#f2f2f2;border-bottom:1px solid #d3d3d3;box-sizing:border-box;"></div>
<div class="b" style="left:96px;top:274px;width:77px;height:16px;background:#c6efce;"></div>
<div class="t" style="left:43px;top:276.2px;font-size:8.5px;line-height:11px;color:#111;">107</div>
<div class="t" style="left:105.8px;top:276.2px;font-size:8.5px;line-height:11px;color:#2b7a34;">Low</div>
<div class="t" style="left:182.7px;top:276.2px;font-size:8.5px;line-height:11px;color:#111;transform:scaleX(0.98);transform-origin:0 50%;">Identify POC</div>
<div class="t" style="left:279.2px;top:276.2px;font-size:8.5px;line-height:11px;color:#111;letter-spacing:0.17px;">mm/dd/yyyy</div>
<div class="t" style="left:360.2px;top:276.2px;font-size:8.5px;line-height:11px;color:#111;letter-spacing:0.02px;">Identify the maintenance task</div>
<div class="t" style="left:521.3px;top:276.2px;font-size:8.5px;line-height:11px;color:#111;letter-spacing:0px;">Add comments</div>
<div class="b" style="left:33px;top:290px;width:569px;height:17px;background:#ffffff;border-bottom:1px solid #d3d3d3;box-sizing:border-box;"></div>
<div class="b" style="left:96px;top:290px;width:77px;height:17px;background:#ffe699;"></div>
<div class="t" style="left:43px;top:292.7px;font-size:8.5px;line-height:11px;color:#111;">108</div>
<div class="t" style="left:105.8px;top:292.7px;font-size:8.5px;line-height:11px;color:#b58a1a;">Medium</div>
<div class="t" style="left:182.7px;top:292.7px;font-size:8.5px;line-height:11px;color:#111;transform:scaleX(0.98);transform-origin:0 50%;">Identify POC</div>
<div class="t" style="left:279.2px;top:292.7px;font-size:8.5px;line-height:11px;color:#111;letter-spacing:0.17px;">mm/dd/yyyy</div>
<div class="t" style="left:360.2px;top:292.7px;font-size:8.5px;line-height:11px;color:#111;letter-spacing:0.02px;">Identify the maintenance task</div>
<div class="t" style="left:521.3px;top:292.7px;font-size:8.5px;line-height:11px;color:#111;letter-spacing:0px;">Add comments</div>
<div class="b" style="left:33px;top:307px;width:569px;height:17px;background:#f2f2f2;border-bottom:1px solid #d3d3d3;box-sizing:border-box;"></div>
<div class="b" style="left:96px;top:307px;width:77px;height:17px;background:#ffc7ce;"></div>
<div class="t" style="left:43px;top:309.7px;font-size:8.5px;line-height:11px;color:#111;">109</div>
<div class="t" style="left:105.8px;top:309.7px;font-size:8.5px;line-height:11px;color:#c0262d;">High</div>
<div class="t" style="left:182.7px;top:309.7px;font-size:8.5px;line-height:11px;color:#111;transform:scaleX(0.98);transform-origin:0 50%;">Identify POC</div>
<div class="t" style="left:279.2px;top:309.7px;font-size:8.5px;line-height:11px;color:#111;letter-spacing:0.17px;">mm/dd/yyyy</div>
<div class="t" style="left:360.2px;top:309.7px;font-size:8.5px;line-height:11px;color:#111;letter-spacing:0.02px;">Identify the maintenance task</div>
<div class="t" style="left:521.3px;top:309.7px;font-size:8.5px;line-height:11px;color:#111;letter-spacing:0px;">Add comments</div>
<div class="b" style="left:33px;top:324px;width:569px;height:17px;background:#ffffff;border-bottom:1px solid #d3d3d3;box-sizing:border-box;"></div>
<div class="b" style="left:96px;top:324px;width:77px;height:17px;background:#c6efce;"></div>
<div class="t" style="left:43px;top:326.7px;font-size:8.5px;line-height:11px;color:#111;">110</div>
<div class="t" style="left:105.8px;top:326.7px;font-size:8.5px;line-height:11px;color:#2b7a34;">Low</div>
<div class="t" style="left:182.7px;top:326.7px;font-size:8.5px;line-height:11px;color:#111;transform:scaleX(0.98);transform-origin:0 50%;">Identify POC</div>
<div class="t" style="left:279.2px;top:326.7px;font-size:8.5px;line-height:11px;color:#111;letter-spacing:0.17px;">mm/dd/yyyy</div>
<div class="t" style="left:360.2px;top:326.7px;font-size:8.5px;line-height:11px;color:#111;letter-spacing:0.02px;">Identify the maintenance task</div>
<div class="t" style="left:521.3px;top:326.7px;font-size:8.5px;line-height:11px;color:#111;letter-spacing:0px;">Add comments</div>
<div class="b" style="left:33px;top:341px;width:569px;height:17px;background:#f2f2f2;border-bottom:1px solid #d3d3d3;box-sizing:border-box;"></div>
<div class="b" style="left:96px;top:341px;width:77px;height:17px;background:#ffe699;"></div>
<div class="t" style="left:43px;top:343.7px;font-size:8.5px;line-height:11px;color:#111;">111</div>
<div class="t" style="left:105.8px;top:343.7px;font-size:8.5px;line-height:11px;color:#b58a1a;">Medium</div>
<div class="t" style="left:182.7px;top:343.7px;font-size:8.5px;line-height:11px;color:#111;transform:scaleX(0.98);transform-origin:0 50%;">Identify POC</div>
<div class="t" style="left:279.2px;top:343.7px;font-size:8.5px;line-height:11px;color:#111;letter-spacing:0.17px;">mm/dd/yyyy</div>
<div class="t" style="left:360.2px;top:343.7px;font-size:8.5px;line-height:11px;color:#111;letter-spacing:0.02px;">Identify the maintenance task</div>
<div class="t" style="left:521.3px;top:343.7px;font-size:8.5px;line-height:11px;color:#111;letter-spacing:0px;">Add comments</div>
<div class="b" style="left:33px;top:358px;width:569px;height:17px;background:#ffffff;border-bottom:1px solid #d3d3d3;box-sizing:border-box;"></div>
<div class="b" style="left:96px;top:358px;width:77px;height:17px;background:#ffc7ce;"></div>
<div class="t" style="left:43px;top:360.7px;font-size:8.5px;line-height:11px;color:#111;">112</div>
<div class="t" style="left:105.8px;top:360.7px;font-size:8.5px;line-height:11px;color:#c0262d;">High</div>
<div class="t" style="left:182.7px;top:360.7px;font-size:8.5px;line-height:11px;color:#111;transform:scaleX(0.98);transform-origin:0 50%;">Identify POC</div>
<div class="t" style="left:279.2px;top:360.7px;font-size:8.5px;line-height:11px;color:#111;letter-spacing:0.17px;">mm/dd/yyyy</div>
<div class="t" style="left:360.2px;top:360.7px;font-size:8.5px;line-height:11px;color:#111;letter-spacing:0.02px;">Identify the maintenance task</div>
<div class="t" style="left:521.3px;top:360.7px;font-size:8.5px;line-height:11px;color:#111;letter-spacing:0px;">Add comments</div>
<div class="b" style="left:33px;top:375px;width:569px;height:17px;background:#f2f2f2;border-bottom:1px solid #d3d3d3;box-sizing:border-box;"></div>
<div class="b" style="left:96px;top:375px;width:77px;height:17px;background:#c6efce;"></div>
<div class="t" style="left:43px;top:377.7px;font-size:8.5px;line-height:11px;color:#111;">113</div>
<div class="t" style="left:105.8px;top:377.7px;font-size:8.5px;line-height:11px;color:#2b7a34;">Low</div>
<div class="t" style="left:182.7px;top:377.7px;font-size:8.5px;line-height:11px;color:#111;transform:scaleX(0.98);transform-origin:0 50%;">Identify POC</div>
<div class="t" style="left:279.2px;top:377.7px;font-size:8.5px;line-height:11px;color:#111;letter-spacing:0.17px;">mm/dd/yyyy</div>
<div class="t" style="left:360.2px;top:377.7px;font-size:8.5px;line-height:11px;color:#111;letter-spacing:0.02px;">Identify the maintenance task</div>
<div class="t" style="left:521.3px;top:377.7px;font-size:8.5px;line-height:11px;color:#111;letter-spacing:0px;">Add comments</div>
<div class="b" style="left:33px;top:392px;width:569px;height:17px;background:#ffffff;border-bottom:1px solid #d3d3d3;box-sizing:border-box;"></div>
<div class="b" style="left:96px;top:392px;width:77px;height:17px;background:#ffe699;"></div>
<div class="t" style="left:43px;top:394.7px;font-size:8.5px;line-height:11px;color:#111;">114</div>
<div class="t" style="left:105.8px;top:394.7px;font-size:8.5px;line-height:11px;color:#b58a1a;">Medium</div>
<div class="t" style="left:182.7px;top:394.7px;font-size:8.5px;line-height:11px;color:#111;transform:scaleX(0.98);transform-origin:0 50%;">Identify POC</div>
<div class="t" style="left:279.2px;top:394.7px;font-size:8.5px;line-height:11px;color:#111;letter-spacing:0.17px;">mm/dd/yyyy</div>
<div class="t" style="left:360.2px;top:394.7px;font-size:8.5px;line-height:11px;color:#111;letter-spacing:0.02px;">Identify the maintenance task</div>
<div class="t" style="left:521.3px;top:394.7px;font-size:8.5px;line-height:11px;color:#111;letter-spacing:0px;">Add comments</div>
<div class="b" style="left:33px;top:409px;width:569px;height:16px;background:#f2f2f2;border-bottom:1px solid #d3d3d3;box-sizing:border-box;"></div>
<div class="b" style="left:96px;top:409px;width:77px;height:16px;background:#ffc7ce;"></div>
<div class="t" style="left:43px;top:411.2px;font-size:8.5px;line-height:11px;color:#111;">115</div>
<div class="t" style="left:105.8px;top:411.2px;font-size:8.5px;line-height:11px;color:#c0262d;">High</div>
<div class="t" style="left:182.7px;top:411.2px;font-size:8.5px;line-height:11px;color:#111;transform:scaleX(0.98);transform-origin:0 50%;">Identify POC</div>
<div class="t" style="left:279.2px;top:411.2px;font-size:8.5px;line-height:11px;color:#111;letter-spacing:0.17px;">mm/dd/yyyy</div>
<div class="t" style="left:360.2px;top:411.2px;font-size:8.5px;line-height:11px;color:#111;letter-spacing:0.02px;">Identify the maintenance task</div>
<div class="t" style="left:521.3px;top:411.2px;font-size:8.5px;line-height:11px;color:#111;letter-spacing:0px;">Add comments</div>
<div class="b" style="left:33px;top:425px;width:569px;height:17px;background:#ffffff;border-bottom:1px solid #d3d3d3;box-sizing:border-box;"></div>
<div class="b" style="left:96px;top:425px;width:77px;height:17px;background:#c6efce;"></div>
<div class="t" style="left:43px;top:427.7px;font-size:8.5px;line-height:11px;color:#111;">116</div>
<div class="t" style="left:105.8px;top:427.7px;font-size:8.5px;line-height:11px;color:#2b7a34;">Low</div>
<div class="t" style="left:182.7px;top:427.7px;font-size:8.5px;line-height:11px;color:#111;transform:scaleX(0.98);transform-origin:0 50%;">Identify POC</div>
<div class="t" style="left:279.2px;top:427.7px;font-size:8.5px;line-height:11px;color:#111;letter-spacing:0.17px;">mm/dd/yyyy</div>
<div class="t" style="left:360.2px;top:427.7px;font-size:8.5px;line-height:11px;color:#111;letter-spacing:0.02px;">Identify the maintenance task</div>
<div class="t" style="left:521.3px;top:427.7px;font-size:8.5px;line-height:11px;color:#111;letter-spacing:0px;">Add comments</div>
<div class="b" style="left:33px;top:442px;width:569px;height:17px;background:#f2f2f2;border-bottom:1px solid #d3d3d3;box-sizing:border-box;"></div>
<div class="b" style="left:96px;top:442px;width:77px;height:17px;background:#ffe699;"></div>
<div class="t" style="left:43px;top:444.7px;font-size:8.5px;line-height:11px;color:#111;">117</div>
<div class="t" style="left:105.8px;top:444.7px;font-size:8.5px;line-height:11px;color:#b58a1a;">Medium</div>
<div class="t" style="left:182.7px;top:444.7px;font-size:8.5px;line-height:11px;color:#111;transform:scaleX(0.98);transform-origin:0 50%;">Identify POC</div>
<div class="t" style="left:279.2px;top:444.7px;font-size:8.5px;line-height:11px;color:#111;letter-spacing:0.17px;">mm/dd/yyyy</div>
<div class="t" style="left:360.2px;top:444.7px;font-size:8.5px;line-height:11px;color:#111;letter-spacing:0.02px;">Identify the maintenance task</div>
<div class="t" style="left:521.3px;top:444.7px;font-size:8.5px;line-height:11px;color:#111;letter-spacing:0px;">Add comments</div>
<div class="b" style="left:33px;top:459px;width:569px;height:17px;background:#ffffff;border-bottom:1px solid #d3d3d3;box-sizing:border-box;"></div>
<div class="b" style="left:96px;top:459px;width:77px;height:17px;background:#ffc7ce;"></div>
<div class="t" style="left:43px;top:461.7px;font-size:8.5px;line-height:11px;color:#111;">118</div>
<div class="t" style="left:105.8px;top:461.7px;font-size:8.5px;line-height:11px;color:#c0262d;">High</div>
<div class="t" style="left:182.7px;top:461.7px;font-size:8.5px;line-height:11px;color:#111;transform:scaleX(0.98);transform-origin:0 50%;">Identify POC</div>
<div class="t" style="left:279.2px;top:461.7px;font-size:8.5px;line-height:11px;color:#111;letter-spacing:0.17px;">mm/dd/yyyy</div>
<div class="t" style="left:360.2px;top:461.7px;font-size:8.5px;line-height:11px;color:#111;letter-spacing:0.02px;">Identify the maintenance task</div>
<div class="t" style="left:521.3px;top:461.7px;font-size:8.5px;line-height:11px;color:#111;letter-spacing:0px;">Add comments</div>
<div class="b" style="left:621px;top:145px;width:120px;height:44px;background:#f1f1f1;border-top:1px solid #a9a9a9;border-bottom:1px solid #a9a9a9;box-sizing:border-box;"></div>
<div class="t" style="left:635.7px;top:154.8px;font-size:8.6px;line-height:11px;color:#333;letter-spacing:0.11px;">Use this form to record</div>
<div class="t" style="left:646.6px;top:167.5px;font-size:8.6px;line-height:11px;color:#333;transform:scaleX(0.958);transform-origin:0 50%;">maintenance tasks</div>
<!-- scrollbars, sheet tabs, status bar -->
<div class="b" style="left:753px;top:107px;width:14px;height:381px;background:#f1f1f1;border-left:1px solid #d8d8d8;box-sizing:border-box;"></div>
<div class="b" style="left:755.4px;top:97px;width:10px;height:10px;background:#fff;border:1px solid #c8c8c8;box-sizing:border-box;"></div>
<svg class="b" style="left:757.8px;top:100.2px" width="5" height="3" viewBox="0 0 5 3"><path d="M0 3H5L2.5 0Z" fill="#666"/></svg>
<div class="b" style="left:755.4px;top:107px;width:10px;height:353px;background:#fff;border:1px solid #c8c8c8;box-sizing:border-box;"></div>
<div class="b" style="left:755.4px;top:479px;width:10px;height:9px;background:#fff;border:1px solid #c8c8c8;box-sizing:border-box;"></div>
<svg class="b" style="left:757.8px;top:482.2px" width="5" height="3" viewBox="0 0 5 3"><path d="M0 0H5L2.5 3Z" fill="#666"/></svg>
<div class="b" style="left:0px;top:488px;width:768px;height:18px;background:#f3f3f3;border-top:1px solid #c6c6c6;box-sizing:border-box;"></div>
<svg class="b" style="left:18px;top:494.2px" width="3.4" height="5.2" viewBox="0 0 3.4 5.2"><path d="M3.4 0V5.2L0 2.6Z" fill="#cacaca"/></svg>
<svg class="b" style="left:36.8px;top:494.2px" width="3.4" height="5.2" viewBox="0 0 3.4 5.2"><path d="M0 0V5.2L3.4 2.6Z" fill="#cacaca"/></svg>
<div class="b" style="left:66px;top:488px;width:91px;height:16.5px;background:#fff;border-left:1px solid #c6c6c6;border-right:1px solid #c6c6c6;border-bottom:2px solid #217346;box-sizing:border-box;"></div>
<div class="t" style="left:74px;top:490.5px;font-size:8.3px;line-height:11px;color:#217346;letter-spacing:0.03px;font-weight:bold;">Maintenance Tasks</div>
<svg class="b" style="left:178.8px;top:491.2px" width="11" height="11" viewBox="0 0 11 11"><circle cx="5.5" cy="5.5" r="4.7" fill="#fff" stroke="#6a6a6a" stroke-width="0.9"/><path d="M5.5 2.9V8.1M2.9 5.5H8.1" stroke="#555" stroke-width="1.1"/></svg>
<div class="b" style="left:460px;top:493.5px;width:1px;height:1px;background:#999;"></div>
<div class="b" style="left:460px;top:496px;width:1px;height:1px;background:#999;"></div>
<div class="b" style="left:460px;top:498.5px;width:1px;height:1px;background:#999;"></div>
<div class="b" style="left:471px;top:492.5px;width:10px;height:9.5px;background:#fff;border:1px solid #c2c2c2;box-sizing:border-box;"></div>
<svg class="b" style="left:474.5px;top:495px" width="3" height="5" viewBox="0 0 3 5"><path d="M3 0V5L0 2.5Z" fill="#666"/></svg>
<div class="b" style="left:482px;top:492.5px;width:232.5px;height:9.5px;background:#fff;border:1px solid #c2c2c2;box-sizing:border-box;"></div>
<div class="b" style="left:744.5px;top:492.5px;width:9.5px;height:9.5px;background:#fff;border:1px solid #c2c2c2;box-sizing:border-box;"></div>
<svg class="b" style="left:748px;top:495px" width="3" height="5" viewBox="0 0 3 5"><path d="M0 0V5L3 2.5Z" fill="#666"/></svg>
<div class="b" style="left:0px;top:506px;width:768px;height:15px;background:#217346;"></div>
<div class="t" style="left:5.7px;top:508.6px;font-size:7.8px;line-height:10px;color:#fff;transform:scaleX(0.781);transform-origin:0 50%;">READY</div>
<svg class="b" style="left:40.3px;top:509px" width="8" height="8" viewBox="0 0 8 8"><rect x="0.5" y="1" width="7" height="6.5" fill="none" stroke="#fff" stroke-width="1"/><rect x="0.5" y="1" width="7" height="2" fill="#fff"/><path d="M2 4.5V7M4 4V7M6 5V7" stroke="#fff" stroke-width="0.9"/><circle cx="6.5" cy="1.5" r="1.3" fill="#fff"/></svg>
<div class="b" style="left:569px;top:506px;width:25px;height:15px;background:#185c37;"></div>
<svg class="b" style="left:578px;top:508.5px" width="9" height="9" viewBox="0 0 9 9"><rect x="0.5" y="0.5" width="8" height="8" fill="none" stroke="#fff" stroke-width="1"/><path d="M3.2 0V9M5.8 0V9M0 3.2H9M0 5.8H9" stroke="#fff" stroke-width="0.8"/></svg>
<svg class="b" style="left:603px;top:508.5px" width="9" height="9" viewBox="0 0 9 9"><rect x="0.5" y="0.5" width="8" height="8" fill="none" stroke="#dfe" stroke-width="1"/><rect x="2.2" y="2.2" width="4.6" height="4.6" fill="none" stroke="#dfe" stroke-width="0.8"/><path d="M2.2 4H6.8M4.5 2.2V6.8" stroke="#dfe" stroke-width="0.6"/></svg>
<svg class="b" style="left:627.5px;top:508.5px" width="9" height="9" viewBox="0 0 9 9"><rect x="0.5" y="0.5" width="8" height="8" fill="none" stroke="#fff" stroke-width="1"/><rect x="2" y="0.5" width="2" height="4.5" fill="#fff"/><rect x="5" y="0.5" width="2" height="4.5" fill="#fff"/></svg>
<svg class="b" style="left:647px;top:510px" width="5" height="6" viewBox="0 0 5 6"><path d="M0.5 3H4.5" stroke="#fff" stroke-width="1.3"/></svg>
<div class="b" style="left:654px;top:512.7px;width:65px;height:0.8px;background:#9cc3ae;"></div>
<div class="b" style="left:685.3px;top:508.5px;width:2.6px;height:9px;background:#fff;"></div>
<svg class="b" style="left:721px;top:510px" width="6" height="6" viewBox="0 0 6 6"><path d="M0.4 3H5.6M3 0.4V5.6" stroke="#fff" stroke-width="1.3"/></svg>
<div class="t" style="left:737.3px;top:508.6px;font-size:7.6px;line-height:10px;color:#fff;transform:scaleX(0.875);transform-origin:0 50%;">100%</div>
<!-- window border -->
<div class="b" style="left:0px;top:0px;width:768px;height:1.4px;background:#a8a8a8;"></div>
<div class="b" style="left:0px;top:0px;width:1px;height:521px;background:#a0a0a0;"></div>
<div class="b" style="left:767px;top:0px;width:1px;height:521px;background:#a0a0a0;"></div>
<div class="b" style="left:0px;top:520px;width:768px;height:1px;background:#8a9a90;"></div>
</body>
</html>
